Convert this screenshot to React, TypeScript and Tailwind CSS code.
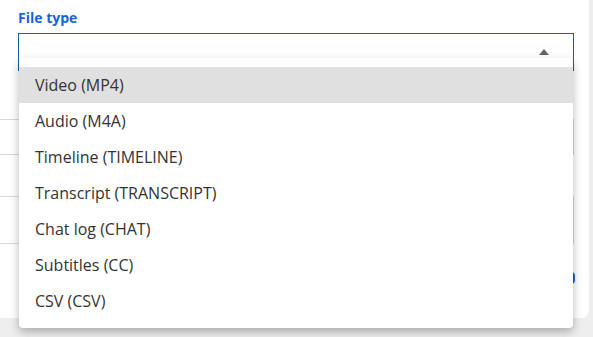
const options = [
  'Video (MP4)',
  'Audio (M4A)',
  'Timeline (TIMELINE)',
  'Transcript (TRANSCRIPT)',
  'Chat log (CHAT)',
  'Subtitles (CC)',
  'CSV (CSV)',
];

export default function App() {
  return (
    <div className="w-[593px] h-[337px] bg-[#eeeeee] overflow-hidden font-['Open_Sans',sans-serif]">
      <div className="relative w-[589px] h-[318px] bg-white rounded-br-lg">
        <div className="pl-[18px] pt-[8px]">
          <label className="block text-[14px] font-bold text-[#1a5fdc] leading-[19px]">File type</label>
          <div className="mt-[6px] w-[556px] h-[38px] border border-[#1b5eae] flex items-center justify-end pr-[24px]">
            <svg width="10" height="6" viewBox="0 0 10 6" className="mb-[1px]">
              <path d="M0 6 L5 0 L10 6 Z" fill="#666666" />
            </svg>
          </div>

          {/* form rows hidden behind the open list */}
          <div className="-ml-[18px] mt-[48px] w-[574px] h-[36px] border-y border-r border-[#d3d9e0]" />
          <div className="-ml-[18px] mt-[41px] w-[574px] h-[48px] border-y border-r border-[#d3d9e0]" />
          <div className="ml-[497px] mt-[28px] w-[60px] h-[12px] rounded-sm bg-[#1f5fd6]" />
        </div>

        <ul className="absolute left-[19px] top-[58px] w-[554px] py-[9px] bg-white rounded-[4px] shadow-[0_4px_10px_rgba(0,0,0,0.28)]">
          {options.map((o, i) => (
            <li
              key={o}
              className={`h-[36px] flex items-center pl-[16px] text-[16px] text-[#333333] ${
                i === 0 ? 'bg-[#e0e0e0]' : ''
              }`}
            >
              {o}
            </li>
          ))}
        </ul>
      </div>
    </div>
  );
}
